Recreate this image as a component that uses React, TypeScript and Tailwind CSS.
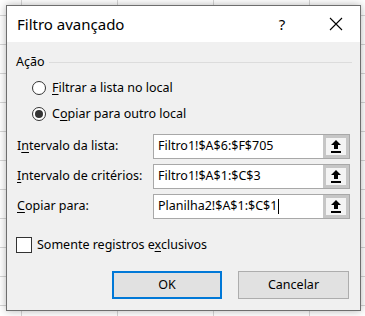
import React from "react"

function U({ children }: { children: React.ReactNode }) {
  return <span className="underline underline-offset-2 decoration-1">{children}</span>
}

function PickButton() {
  return (
    <div className="w-[26px] h-full border-[3px] border-[#c6c6c6] bg-[#f4f4f4] flex items-center justify-center">
      <svg width="10" height="13" viewBox="0 0 10 13">
        <polygon points="5,0 10,5 7,5 7,9 3,9 3,5 0,5" fill="#000" />
        <rect x="0" y="11" width="10" height="2" fill="#000" />
      </svg>
    </div>
  )
}

function RangeRow({ label, value, caret = false }: { label: React.ReactNode; value: string; caret?: boolean }) {
  return (
    <div className="flex items-center h-[25px]">
      <div className="w-[136px] text-[12.5px] text-black">{label}</div>
      <div className="flex h-full w-[197px] border border-[#a8a8a8] bg-white">
        <div className="flex-1 flex items-center pl-[4px] text-[12.5px] text-black">
          {value}
          {caret && <span className="w-px h-[15px] bg-black ml-px" />}
        </div>
        <PickButton />
      </div>
    </div>
  )
}

function Radio({ checked, children }: { checked?: boolean; children: React.ReactNode }) {
  return (
    <div className="flex items-center h-[26px] pl-[25px] gap-[6px]">
      <div className="w-[14px] h-[14px] rounded-full border border-[#333] bg-white flex items-center justify-center">
        {checked && <div className="w-[8px] h-[8px] rounded-full bg-[#333]" />}
      </div>
      <span className="text-[12.5px] text-black">{children}</span>
    </div>
  )
}

export default function App() {
  return (
    <div className="relative w-[365px] h-[316px] overflow-hidden bg-white font-['Noto_Sans','Open_Sans',sans-serif] bg-[linear-gradient(to_right,#d6d6d6_1px,transparent_1px),linear-gradient(to_bottom,#d6d6d6_1px,transparent_1px)] bg-[size:96px_29px] bg-[position:21px_15px]">
      <div className="absolute left-[6px] top-[5px] w-[355px] h-[306px] border border-[#6e6e6e] bg-[#f0f0f0] shadow-[0_0_8px_rgba(0,0,0,0.3)] flex flex-col">
        <div className="h-[36px] bg-white flex items-center pl-[10px]">
          <span className="text-[15px] text-black flex-1">Filtro avançado</span>
          <span className="text-[15px] text-black w-[20px] text-center mr-[37px]">?</span>
          <svg width="14" height="14" viewBox="0 0 14 14" className="mr-[17px]">
            <path d="M1 1L13 13M13 1L1 13" stroke="#000" strokeWidth="1.1" />
          </svg>
        </div>

        <div className="flex items-center h-[16px] mt-[12px] pl-[9px] pr-[8px] gap-[4px]">
          <span className="text-[12.5px] text-black">Ação</span>
          <div className="flex-1 h-px bg-[#dcdcdc]" />
        </div>
        <div className="mt-[5px]">
          <Radio>
            <U>F</U>iltrar a lista no local
          </Radio>
          <Radio checked>
            C<U>o</U>piar para outro local
          </Radio>
        </div>

        <div className="mt-[7px] pl-[10px] flex flex-col gap-[5px]">
          <RangeRow label={<>I<U>n</U>tervalo da lista:</>} value="Filtro1!$A$6:$F$705" />
          <RangeRow label={<><U>I</U>ntervalo de critérios:</>} value="Filtro1!$A$1:$C$3" />
          <RangeRow label={<><U>C</U>opiar para:</>} value="Planilha2!$A$1:$C$1" caret />
        </div>

        <div className="mt-[18px] pl-[9px] flex items-center gap-[5px] h-[16px]">
          <div className="w-[16px] h-[16px] border border-[#333] bg-white" />
          <span className="text-[12.5px] text-black">
            Somente registros e<U>x</U>clusivos
          </span>
        </div>

        <div className="mt-[18px] flex justify-end gap-[16px] pr-[11px]">
          <button className="w-[110px] h-[28px] border-2 border-[#0078d7] bg-[#e1e1e1] text-[12.5px] text-black">
            OK
          </button>
          <button className="w-[111px] h-[28px] border border-[#adadad] bg-[#e1e1e1] text-[12.5px] text-black">
            Cancelar
          </button>
        </div>
      </div>
    </div>
  )
}
